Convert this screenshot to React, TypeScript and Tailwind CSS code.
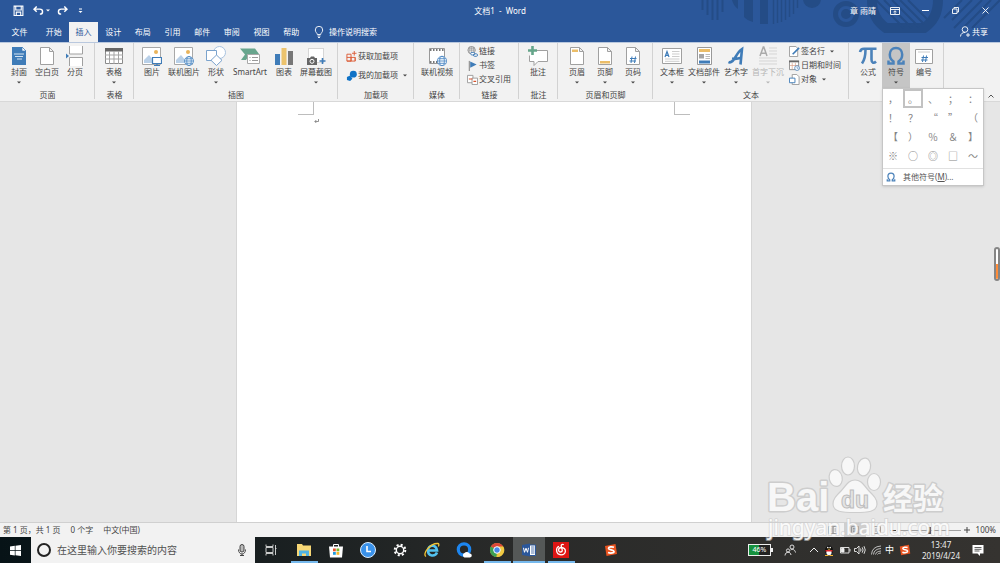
import { useState, type ReactNode } from "react";
import clsx from "clsx";

const TABS = ["开始", "插入", "设计", "布局", "引用", "邮件", "审阅", "视图", "帮助"];

const SYMBOLS = [
  "，", "。", "、", "；", "：",
  "！", "？", "“", "”", "（",
  "【", "）", "％", "＆", "】",
  "※", "○", "◎", "□", "～",
];

/* ---------- ribbon icons, 20x20 ---------- */

function Icon({ children, className = "h-5 w-5" }: { children: ReactNode; className?: string }) {
  return (
    <svg viewBox="0 0 20 20" className={clsx("block shrink-0", className)} fill="none" aria-hidden="true">
      {children}
    </svg>
  );
}

const Sheet = () => <path d="M3.5 1.5h9l4 4v13h-13zM12.5 1.5v4h4" fill="#fff" stroke="#a0a0a0" />;

const CoverIcon = () => (
  <Icon>
    <path d="M3 1h10l4 4v14H3z" fill="#3f7cb8" />
    <path d="M13 1v4h4z" fill="#fff" stroke="#3f7cb8" strokeWidth=".7" />
    <path d="M5 8h10M6 10.500h8M8 13h5" stroke="#d5e4f2" />
  </Icon>
);

const BlankIcon = () => <Icon><Sheet /></Icon>;

const BreakIcon = () => (
  <Icon>
    <path d="M4.500 0v8h13V0M4.500 20v-8.500h13V20" fill="#fff" stroke="#a0a0a0" />
    <path d="M1 7.500 4 10l-3 2.500z" fill="#3f7cb8" />
  </Icon>
);

const TableIcon = () => (
  <Icon>
    <path d="M1.500 2.500h17v15h-17z" fill="#fff" stroke="#8a8a8a" />
    <path d="M1 2h18v3.500H1z" fill="#666" />
    <path d="M1 9h18M1 13h18M5.500 5v13M10 5v13M14.500 5v13" stroke="#a5a5a5" />
  </Icon>
);

const PhotoBase = () => (
  <>
    <path d="M.5 1.500h18v17H.5z" fill="#fff" stroke="#a8a8a8" />
    <circle cx="14" cy="6" r="2" fill="#e9b45c" />
    <path d="M2 17v-3l5-5 5 6v2z" fill="#b9d0e8" />
  </>
);

const Globe = ({ x, y, r }: { x: number; y: number; r: number }) => (
  <g stroke="#4a86c3" strokeWidth=".8">
    <circle cx={x} cy={y} r={r} fill="#eef5fb" />
    <ellipse cx={x} cy={y} rx={r / 2} ry={r} />
    <path d={`M${x - r} ${y}h${r * 2}M${x - r + 1} ${y - r / 2}h${r * 2 - 2}M${x - r + 1} ${y + r / 2}h${r * 2 - 2}`} />
  </g>
);

const PictureIcon = () => (
  <Icon>
    <PhotoBase />
    <path d="M10.500 11.500h9v6h-9zM15 17.500v2M12 19.500h6" fill="#fff" stroke="#3f7cb8" strokeWidth="1.200" />
  </Icon>
);

const OnlinePictureIcon = () => (
  <Icon>
    <PhotoBase />
    <Globe x={15} y={15} r={4.500} />
  </Icon>
);

const ShapesIcon = () => (
  <Icon>
    <circle cx="13.500" cy="6.500" r="6" fill="#fff" stroke="#a9c3df" />
    <path d="M.500 4.500h10v10H.500z" fill="#fff" stroke="#7ba3cd" />
    <path d="m10.500 9 5.500 5.300-5.500 5.200L5 14.300z" fill="#fff" stroke="#7ba3cd" />
  </Icon>
);

const SmartArtIcon = () => (
  <Icon>
    <path d="M0 2.500h15l4 5.500h-9l-4 6H1l4-5.500z" fill="#68a58d" />
    <path d="M7.500 8.500h12v9h-12z" fill="#fff" stroke="#a8a8a8" />
    <path d="M9.500 11.500h1M9.500 14.500h1M12 11.500h6M12 14.500h6" stroke="#999" />
  </Icon>
);

const ChartIcon = () => (
  <Icon>
    <path d="M1 8h5v11H1z" fill="#3f7cb8" />
    <path d="M7.500 2h5v17h-5z" fill="#ecc36d" />
    <path d="M14 5h5v14h-5z" fill="#777" />
  </Icon>
);

const ScreenshotIcon = () => (
  <Icon>
    <path d="M2.500 2.500h15v14h-15z" fill="#fff" stroke="#b5b5b5" strokeDasharray="1 1" />
    <path d="M1 12h3l1-1.500h3l1 1.500h2v7H1z" fill="#666" />
    <circle cx="6" cy="15.300" r="2" fill="#666" stroke="#fff" />
    <path d="M16.500 12v6M13.500 15h6" stroke="#3f7cb8" strokeWidth="1.600" />
  </Icon>
);

const VideoIcon = () => (
  <Icon>
    <path d="M2.500 2.500h15v15h-15z" fill="#fff" stroke="#999" />
    <path d="M3 4h14M3 16h14" stroke="#777" strokeWidth="2" strokeDasharray="1.500 1.500" />
    <Globe x={15} y={15} r={4.700} />
  </Icon>
);

const CommentIcon = () => (
  <Icon>
    <path d="M4.500 4.500h15v11H10l-4 4v-4H1.500v-6" fill="#fff" stroke="#a0a0a0" />
    <path d="M4.500 0v9M0 4.500h9" stroke="#65a58a" strokeWidth="2.600" />
  </Icon>
);

const HeaderIcon = () => <Icon><Sheet /><path d="M5 3.500h6V6H5z" fill="#ebbd68" /></Icon>;
const FooterIcon = () => <Icon><Sheet /><path d="M5 15h10v2.500H5z" fill="#ebbd68" /></Icon>;
const PageNoIcon = () => (
  <Icon>
    <Sheet />
    <path d="M9 10.500 8 17M12.500 10.500l-1 6.500M7 12.500h6.500M6.500 15h6.500" stroke="#3f7cb8" />
  </Icon>
);

const TextBoxIcon = () => (
  <Icon>
    <path d="M.500 2.500h19v15H.500z" fill="#fff" stroke="#a0a0a0" />
    <path d="m3 11 2-5.500L7 11M3.700 9.300h2.800" stroke="#3f7cb8" strokeWidth="1.200" />
    <path d="M10 5.500h7.500M10 8h7.500M10 10.500h7.500M3 13h14.500M3 15.300h14.500" stroke="#c0c0c0" strokeWidth=".8" />
  </Icon>
);

const PartsIcon = () => (
  <Icon>
    <path d="M3.500 1.500h14v17h-14z" fill="#fff" stroke="#999" />
    <path d="M5 3h11v3H5z" fill="#ebbd68" />
    <path d="M5 8h5v4.500H5z" fill="#a5a5a5" />
    <path d="M11.500 8.500H16M11.500 10.500H16M11.500 12.500H16" stroke="#aaa" strokeWidth=".8" />
    <path d="M5 14.500h11v3H5z" fill="#3f7cb8" />
  </Icon>
);

const WordArtIcon = () => (
  <Icon>
    <path d="M2.500 16c3 1.500 5-1.500 7-5s4-6.500 6.500-8L14.500 18.500M6 12.500c3 .700 6 .300 9-.700" stroke="#3f7cb8" strokeWidth="2.600" />
  </Icon>
);

const DropCapIcon = () => (
  <Icon>
    <path d="m2 10 3.300-9h.500L9 10M3.300 7.200h4.600" stroke="#aaa" strokeWidth="1.500" />
    <path d="M11 2h8M11 5h8M11 8h8M1 12h18M1 15h18M1 18h18" stroke="#d5d5d5" />
  </Icon>
);

const PiIcon = () => (
  <Icon>
    <path d="M2 6c.5-2.500 2-3.300 4-3.300h12.500M7.500 3.500c0 6-.500 10-3.500 14M13.500 3.500v10c0 3 2 4.500 4.500 2" stroke="#4b82ba" strokeWidth="2.600" />
  </Icon>
);

const OmegaIcon = ({ className }: { className?: string }) => (
  <Icon className={className}>
    <path d="M2.500 14.500v3h5v-2C5 14 3.800 11.500 3.800 8.500 3.800 4.500 6.300 2 10 2s6.200 2.500 6.200 6.500c0 3-1.200 5.500-3.700 7v2h5v-3" stroke="#4b82ba" strokeWidth="2.500" />
  </Icon>
);

const NumberIcon = () => (
  <Icon>
    <path d="M1.500 3.500h17v14h-17z" fill="#fff" stroke="#a0a0a0" />
    <path d="M4 6h12" stroke="#ccc" />
    <path d="M9.500 9.500 8.500 16M12.500 9.500l-1 6.500M7.500 11.500H14M7 14h6.500" stroke="#3f7cb8" />
  </Icon>
);

/* ---------- small ribbon icons ---------- */

function MiniIcon({ children }: { children: ReactNode }) {
  return <svg viewBox="0 0 12 12" className="h-[11px] w-[11px] shrink-0" fill="none" aria-hidden="true">{children}</svg>;
}

const StoreIcon = () => <MiniIcon><path d="M1 3.500h4.500V11H1zM1 7h9v4H1M5.500 7v4M10 7v4M9 0v5M6.500 2.500h5" stroke="#dc5a33" /></MiniIcon>;
const AddinIcon = () => <MiniIcon><circle cx="8" cy="4.500" r="3.800" fill="#0f72c6" /><path d="M1 7.500 4.500 6 7 9.500 4.500 12 1 11z" fill="#0f72c6" /></MiniIcon>;
const LinkIcon = () => (
  <MiniIcon>
    <circle cx="5" cy="4.500" r="4" stroke="#777" strokeWidth=".8" />
    <path d="M1 4.500h8M5 .500v8M2 2.500h6M3 .800v7.500M7 1v7" stroke="#888" strokeWidth=".6" />
    <rect x="4" y="7" width="4.500" height="2.800" rx="1.400" fill="#fff" stroke="#3f7cb8" />
    <rect x="7" y="8.500" width="4.500" height="2.800" rx="1.400" stroke="#3f7cb8" />
  </MiniIcon>
);
const BookmarkIcon = () => <MiniIcon><path d="M2.500 1v11" stroke="#777" /><path d="M3.500 1.500 10.500 5l-7 3.500z" fill="#3f7cb8" /></MiniIcon>;
const CrossRefIcon = () => (
  <MiniIcon>
    <path d="M.500 1.500h6v8h-6z" fill="#fff" stroke="#999" />
    <path d="M5.500 4.500h6v7h-6z" fill="#fff" stroke="#999" />
    <path d="M2 5.500h4M7 8h3" stroke="#d9532c" strokeWidth="1.200" />
  </MiniIcon>
);
const SignIcon = () => (
  <MiniIcon>
    <path d="M.500.500h7l2 2v9h-9z" fill="#fff" stroke="#999" />
    <path d="m4 9 7-7" stroke="#3f7cb8" strokeWidth="1.800" />
  </MiniIcon>
);
const DateIcon = () => (
  <MiniIcon>
    <path d="M.500 1.500h10v9h-10z" fill="#fff" stroke="#888" />
    <path d="M0 1.500h11" stroke="#666" strokeWidth="2" />
    <path d="M1 6h9M3.500 3v7M7 3v7" stroke="#d69a80" strokeWidth=".7" />
    <circle cx="8.800" cy="8.800" r="2.600" fill="#fff" stroke="#3f7cb8" strokeWidth=".8" />
    <path d="M8.800 7.300V9h1.500" stroke="#3f7cb8" strokeWidth=".7" />
  </MiniIcon>
);
const ObjectIcon = () => (
  <MiniIcon>
    <path d="M3.500.500h5l2.500 2.500v8.500H3.500z" fill="#fff" stroke="#999" />
    <path d="M.500 4.500h6v5h-6z" fill="#fff" stroke="#3f7cb8" />
  </MiniIcon>
);

const Caret = ({ className }: { className?: string }) => (
  <svg viewBox="0 0 4 3" className={clsx("h-[3px] w-1 shrink-0", className)} aria-hidden="true">
    <path d="M0 .500h4L2 2.500z" fill="currentColor" />
  </svg>
);

/* ---------- ribbon parts ---------- */

type BigProps = { icon: ReactNode; label: string; wide?: boolean; caret?: boolean; disabled?: boolean; active?: boolean; onClick?: () => void };

function BigButton({ icon, label, wide, caret, disabled, active, onClick }: BigProps) {
  return (
    <button
      type="button"
      disabled={disabled}
      onClick={onClick}
      className={clsx(
        "flex h-[45px] shrink-0 flex-col items-center whitespace-nowrap pt-[3px]",
        wide ? "w-8" : "w-7",
        active && "bg-[#c5c5c5]",
        disabled && "text-[#b5b5b5]",
      )}
    >
      {icon}
      <span className="flex h-3 items-center">{label}</span>
      {caret && <Caret className="mt-[3px]" />}
    </button>
  );
}

function SmallButton({ icon, label, caret }: { icon: ReactNode; label: string; caret?: boolean }) {
  return (
    <button type="button" className="flex h-[14px] items-center gap-px whitespace-nowrap">
      {icon}
      <span>{label}</span>
      {caret && <Caret className="ml-1" />}
    </button>
  );
}

function Group({ title, className, children }: { title?: string; className?: string; children: ReactNode }) {
  return (
    <section className="relative flex shrink-0 flex-col after:absolute after:top-0 after:right-0 after:h-14 after:w-px after:bg-[#d2d2d2]">
      <div className={clsx("flex h-[45px] shrink-0", className)}>{children}</div>
      {title && <div className="mt-px flex h-3 shrink-0 items-center justify-center">{title}</div>}
    </section>
  );
}

function SymbolMenu() {
  const [picked, setPicked] = useState(1);
  return (
    <div className="absolute top-full left-0 z-20 w-[102px] border border-[#c6c6c6] bg-white shadow-sm">
      <div className="grid grid-cols-5 pb-[3px] font-['Noto_Sans_CJK_SC',sans-serif] text-[10px] leading-none text-[#858585]">
        {SYMBOLS.map((s, i) => (
          <button
            key={s}
            type="button"
            onClick={() => setPicked(i)}
            className={clsx("flex h-[19px] items-center justify-center", i === picked && "border-2 border-[#c2c2c2]")}
          >
            {s}
          </button>
        ))}
      </div>
      <button type="button" className="flex h-[17px] w-full items-center gap-[7px] border-t border-[#e1e1e1] px-[3px] text-[#555]">
        <OmegaIcon className="h-[10px] w-[10px]" />
        <span>其他符号(<u>M</u>)...</span>
      </button>
    </div>
  );
}

function Ribbon() {
  const [open, setOpen] = useState(true);
  return (
    <div className="relative flex h-[60px] border-t border-b border-t-[#b9c8de] border-b-[#d8d8d8] bg-[#f2f2f2] text-[#444]">
      <Group title="页面" className="pr-[6px] pl-[5px]">
        <BigButton icon={<CoverIcon />} label="封面" caret />
        <BigButton icon={<BlankIcon />} label="空白页" />
        <BigButton icon={<BreakIcon />} label="分页" />
      </Group>
      <Group title="表格" className="pr-[6px] pl-[5px]">
        <BigButton icon={<TableIcon />} label="表格" caret />
      </Group>
      <Group title="插图" className="pr-[6px] pl-[2px]">
        <BigButton wide icon={<PictureIcon />} label="图片" />
        <BigButton wide icon={<OnlinePictureIcon />} label="联机图片" />
        <BigButton wide icon={<ShapesIcon />} label="形状" caret />
        <div className="px-[2px]">
          <BigButton wide icon={<SmartArtIcon />} label="SmartArt" />
        </div>
        <BigButton wide icon={<ChartIcon />} label="图表" />
        <BigButton wide icon={<ScreenshotIcon />} label="屏幕截图" caret />
      </Group>
      <Group title="加载项" className="flex-col gap-[5px] pt-[6px] pr-[7px] pl-2">
        <SmallButton icon={<StoreIcon />} label="获取加载项" />
        <SmallButton icon={<AddinIcon />} label="我的加载项" caret />
      </Group>
      <Group title="媒体" className="px-[7px]">
        <BigButton wide icon={<VideoIcon />} label="联机视频" />
      </Group>
      <Group title="链接" className="flex-col pt-px pr-2 pl-[7px]">
        <SmallButton icon={<LinkIcon />} label="链接" />
        <SmallButton icon={<BookmarkIcon />} label="书签" />
        <SmallButton icon={<CrossRefIcon />} label="交叉引用" />
      </Group>
      <Group title="批注" className="pr-[6px] pl-[5px]">
        <BigButton icon={<CommentIcon />} label="批注" />
      </Group>
      <Group title="页眉和页脚" className="pr-[6px] pl-[5px]">
        <BigButton icon={<HeaderIcon />} label="页眉" caret />
        <BigButton icon={<FooterIcon />} label="页脚" caret />
        <BigButton icon={<PageNoIcon />} label="页码" caret />
      </Group>
      <Group title="文本" className="pr-2 pl-[3px]">
        <BigButton wide icon={<TextBoxIcon />} label="文本框" caret />
        <BigButton wide icon={<PartsIcon />} label="文档部件" caret />
        <BigButton wide icon={<WordArtIcon />} label="艺术字" caret />
        <BigButton wide icon={<DropCapIcon />} label="首字下沉" caret disabled />
        <div className="flex flex-col pt-px pl-[5px]">
          <SmallButton icon={<SignIcon />} label="签名行" caret />
          <SmallButton icon={<DateIcon />} label="日期和时间" />
          <SmallButton icon={<ObjectIcon />} label="对象" caret />
        </div>
      </Group>
      <Group className="pr-[6px] pl-[5px]">
        <BigButton icon={<PiIcon />} label="公式" caret />
        <div className="relative">
          <BigButton icon={<OmegaIcon />} label="符号" caret active={open} onClick={() => setOpen(!open)} />
          {open && <SymbolMenu />}
        </div>
        <BigButton icon={<NumberIcon />} label="编号" />
      </Group>
      <button type="button" aria-label="折叠功能区" className="mt-auto mr-[6px] mb-[2px] ml-auto">
        <svg viewBox="0 0 6 6" className="h-[6px] w-[6px]" fill="none"><path d="M.500 4.500 3 2l2.500 2.500" stroke="#555" /></svg>
      </button>
    </div>
  );
}

/* ---------- title bar ---------- */

function HeaderArt() {
  return (
    <svg viewBox="0 0 310 42" className="pointer-events-none absolute top-0 right-0 h-[42px] w-[310px]" fill="none" aria-hidden="true">
      <g stroke="#244c86">
        <path d="M12.500 0v10M17.500 0v15M22.500 0v20M27.500 0v20M32.500 0v12" strokeWidth="2" />
        <path d="M83.500 0v24M87.500 0v23M91.500 0v22M95.500 0v20M99.500 0v17M103.500 0v14M107.500 0v8" strokeWidth="1.500" />
        <circle cx="156" cy="14" r="10.500" strokeWidth="5" />
        <path d="M182 0c0 12 5 22 14 28h38c9-6 14-16 14-28" strokeWidth="10" />
        <path d="m186 0 28 28M194 0l28 28M202 0l27 27M210 0l24 24M218 0l20 20" strokeWidth="2" />
        <path d="m264 28 28-28M273 28l28-28M262 20l20-20M282 28l28-28M254 18l18-18" strokeWidth="2" />
      </g>
      <g fill="#244c86">
        <path d="M42 0h6v9C45 7 43 4 42 0zM54 0h9v22c-4-1-7-3-9-5zM70 0h8v24h-8z" />
        <circle cx="122" cy="-1" r="9" />
        <circle cx="156" cy="14" r="5" />
      </g>
    </svg>
  );
}

function TitleBar() {
  return (
    <div className="relative grid h-[21px] grid-cols-[1fr_auto_1fr] items-center">
      <div className="flex items-center pl-[13px]">
        <button type="button" aria-label="保存" className="w-5">
          <svg viewBox="0 0 10 10" className="h-[11px] w-[11px]" fill="none" stroke="#fff">
            <path d="M1 1h8v8.500H1zM2.500 1v3.500h5V1M3 9V6.500h4V9" />
          </svg>
        </button>
        <button type="button" aria-label="撤消" className="flex w-6 items-center gap-[2px]">
          <svg viewBox="0 0 12 10" className="h-[9px] w-[11px]" fill="none" stroke="#fff" strokeWidth="1.600">
            <path d="M4 .500 1 3.500l3 3M1 3.500h6.500c4 0 4 5.500 0 5.500" />
          </svg>
          <Caret className="text-white" />
        </button>
        <button type="button" aria-label="恢复" className="w-[21px]">
          <svg viewBox="0 0 12 10" className="h-[9px] w-[11px]" fill="none" stroke="#fff" strokeWidth="1.600">
            <path d="m8 .500 3 3-3 3M11 3.500H4.500c-4 0-4 5.500 0 5.500" />
          </svg>
        </button>
        <button type="button" aria-label="自定义快速访问工具栏">
          <svg viewBox="0 0 5 6" className="h-[6px] w-[5px]"><path d="M1 .500h3v1H1zM.500 3h4L2.500 5z" fill="#fff" /></svg>
        </button>
      </div>
      <div className="whitespace-pre">文档1  -  Word</div>
      <div className="flex items-center justify-end">
        <span className="mr-1">章 雨晴</span>
        <button type="button" aria-label="功能区显示选项" className="flex w-[30px] justify-center">
          <svg viewBox="0 0 10 8" className="h-2 w-[10px]" fill="none" stroke="#fff" strokeWidth=".9"><path d="M.500.500h9v7h-9zM.500 2.500h9M5 7V4M3.500 5 5 3.800 6.500 5" /></svg>
        </button>
        <button type="button" aria-label="最小化" className="flex w-[30px] justify-center">
          <svg viewBox="0 0 7 7" className="h-[7px] w-[7px]" stroke="#fff"><path d="M0 3.500h7" /></svg>
        </button>
        <button type="button" aria-label="向下还原" className="flex w-[30px] justify-center">
          <svg viewBox="0 0 7 7" className="h-[7px] w-[7px]" fill="none" stroke="#fff" strokeWidth=".9"><path d="M.500 2h4.500v4.500H.500zM2 2V.500h4.500V5H5" /></svg>
        </button>
        <button type="button" aria-label="关闭" className="flex w-[30px] justify-center">
          <svg viewBox="0 0 7 7" className="h-[7px] w-[7px]" stroke="#fff" strokeWidth=".9"><path d="m.500.500 6 6M6.500.500l-6 6" /></svg>
        </button>
      </div>
    </div>
  );
}

function TabBar() {
  const [tab, setTab] = useState("插入");
  return (
    <div className="relative flex h-[21px] items-stretch">
      <button type="button" className="w-[39px]">文件</button>
      <nav className="grid w-[267px] grid-cols-9 pt-px">
        {TABS.map((t) => (
          <button key={t} type="button" onClick={() => setTab(t)} className={clsx(t === tab && "bg-[#f2f2f2] text-[#2b579a]")}>
            {t}
          </button>
        ))}
      </nav>
      <button type="button" className="ml-2 flex items-center gap-[5px]">
        <svg viewBox="0 0 10 12" className="h-3 w-[10px]" fill="none" stroke="#fff" strokeWidth=".9">
          <path d="M3.300 8.500c0-1.500-2-2.200-2-4.500a3.700 3.700 0 0 1 7.400 0c0 2.300-2 3-2 4.500zM3.500 10h3M4 11.500h2" />
        </svg>
        操作说明搜索
      </button>
      <button type="button" className="mr-3 ml-auto flex items-center gap-px">
        <svg viewBox="0 0 11 11" className="h-[11px] w-[11px]" fill="none" stroke="#fff" strokeWidth=".9">
          <circle cx="5" cy="3.500" r="2.800" />
          <path d="M.500 10.500c.3-3 2-4 4.500-4M8 7v4M6 9h4" />
        </svg>
        共享
      </button>
    </div>
  );
}

/* ---------- document ---------- */

function Document() {
  return (
    <main className="relative flex flex-1 bg-[#e6e6e6] pr-3">
      <div className="mx-auto w-[516px] border-x border-[#d6d6d6] bg-white">
        <div className="flex justify-between px-[61px]">
          <div className="h-[13px] w-4 border-r border-b border-[#bdbdbd]" />
          <div className="h-[13px] w-4 border-b border-l border-[#bdbdbd]" />
        </div>
        <div className="px-[77px] pt-1">
          <svg viewBox="0 0 5 5" className="h-[5px] w-[5px]" fill="none" stroke="#777" strokeWidth=".8"><path d="M4.500 0v2.500H1M2.300 1 .800 2.500l1.500 1.500" /></svg>
        </div>
      </div>
      <div className="absolute top-[145px] right-0 flex h-[34px] w-[6px] items-end overflow-hidden rounded-sm border-2 border-[#858585] bg-white">
        <div className="h-1/2 w-full bg-[#ff8c39]" />
      </div>
    </main>
  );
}

function StatusBar() {
  return (
    <footer className="flex h-[15px] items-center border-t border-[#d0d0d0] bg-[#f2f2f2] pl-[3px] text-[#444]">
      <span>第 1 页，共 1 页</span>
      <span className="ml-[10px]">0 个字</span>
      <span className="ml-[10px]">中文(中国)</span>
      <div className="ml-auto flex h-full items-center">
        <button type="button" aria-label="阅读视图" className="flex h-full w-[22px] items-center justify-center">
          <svg viewBox="0 0 10 8" className="h-2 w-[10px]" fill="none" stroke="#999"><path d="M.500.500H5v7H.500zM5 .500h4.500v7H5zM2 3h1.500M6.500 3H8M2 5h1.500M6.500 5H8" /></svg>
        </button>
        <button type="button" aria-label="页面视图" className="flex h-full w-[22px] items-center justify-center bg-[#cfcfcf]">
          <svg viewBox="0 0 8 8" className="h-2 w-2" fill="none" stroke="#999"><path d="M.500.500h7v7h-7zM2 2.500h4M2 4h4M2 5.500h4" /></svg>
        </button>
        <button type="button" aria-label="Web 版式视图" className="flex h-full w-[22px] items-center justify-center">
          <svg viewBox="0 0 8 8" className="h-2 w-2" fill="none" stroke="#999"><path d="M.500.500h7v7h-7zM2 3h4M2 5h2" /><circle cx="6" cy="6" r="1.500" /></svg>
        </button>
        <button type="button" aria-label="缩小" className="flex w-[10px] justify-center">
          <svg viewBox="0 0 6 6" className="h-[6px] w-[6px]" stroke="#444"><path d="M0 3.500h6" /></svg>
        </button>
        <input
          type="range"
          aria-label="缩放"
          defaultValue={50}
          className="mx-px h-px w-[62px] appearance-none bg-[#a0a0a0] [&::-webkit-slider-thumb]:h-[7px] [&::-webkit-slider-thumb]:w-[3px] [&::-webkit-slider-thumb]:appearance-none [&::-webkit-slider-thumb]:bg-[#555]"
        />
        <button type="button" aria-label="放大" className="flex w-[10px] justify-center">
          <svg viewBox="0 0 6 6" className="h-[6px] w-[6px]" stroke="#444"><path d="M0 3h6M3 0v6" /></svg>
        </button>
        <span className="mx-1">100%</span>
      </div>
    </footer>
  );
}

/* ---------- taskbar ---------- */

function TaskButton({ label, open, active, children }: { label: string; open?: boolean; active?: boolean; children: ReactNode }) {
  return (
    <button
      type="button"
      aria-label={label}
      className={clsx(
        "relative flex h-full w-8 items-center justify-center",
        active && "bg-[#555857]",
        open && "after:absolute after:bottom-0 after:h-[2px] after:bg-[#76b9ed]",
        open && (active ? "after:w-full" : "after:w-[27px]"),
      )}
    >
      <svg viewBox="0 0 16 16" className="h-4 w-4" fill="none">{children}</svg>
    </button>
  );
}

const Sogou = () => (
  <>
    <path d="M2 4 12.500 2l1.500 10-10.500 2z" fill="#e9531f" />
    <path d="M11 5.200c-2-.700-5.500-.500-5.500 1.200S10.800 7.500 11 9.300 7.500 11.500 5 10.500" stroke="#fff" strokeWidth="1.700" fill="none" />
  </>
);

function Tray() {
  return (
    <div className="ml-auto flex h-full items-center text-white">
      <div className="relative mr-[13px] flex h-3 w-[23px] items-center justify-center border border-[#eee] bg-[linear-gradient(90deg,#17923f_46%,#222_46%)] text-[7px] after:absolute after:-right-[3px] after:h-1 after:w-[2px] after:bg-[#eee]">
        46%
      </div>
      <div className="flex items-center">
        <svg viewBox="0 0 12 12" className="mr-3 h-3 w-3" fill="none" stroke="#eee" strokeWidth=".9">
          <circle cx="8" cy="3" r="2" /><circle cx="4" cy="6.500" r="1.600" />
          <path d="M1 11.500c.300-2.200 1.500-3.300 3-3.300S6.700 9 7 11M6.500 6c2.500-1.500 4.500 0 5 2.500" />
        </svg>
        <svg viewBox="0 0 12 12" className="mr-[3px] h-3 w-3" fill="none" stroke="#eee"><path d="m2 8 4-4 4 4" /></svg>
        <svg viewBox="0 0 12 12" className="mr-1 h-3 w-3">
          <ellipse cx="6" cy="6.500" rx="4" ry="5" fill="#111" />
          <ellipse cx="6" cy="8.500" rx="2.600" ry="2.800" fill="#fff" />
          <circle cx="4.800" cy="3.500" r=".8" fill="#fff" /><circle cx="7.200" cy="3.500" r=".8" fill="#fff" />
          <path d="M4 4.800h4l-2 1z" fill="#f4b22e" />
          <path d="M2.500 6h7v1.500h-7z" fill="#d8262b" />
          <path d="M2 11h3.500v1H2zM6.500 11H10v1H6.500z" fill="#f4b22e" />
        </svg>
        <svg viewBox="0 0 12 12" className="mr-[3px] h-3 w-3" fill="none" stroke="#eee" strokeWidth=".9"><path d="M1.500 3.500h8.500v5.500H1.500zM11 5v2.500" /><path d="M2.500 4.500h2.500V8H2.500z" fill="#eee" /></svg>
        <svg viewBox="0 0 12 12" className="mr-1 h-3 w-3" fill="none" stroke="#eee" strokeWidth=".9"><path d="M.500 4.500h2L5 2v8L2.500 7.500h-2zM6.500 4.500q1 1.500 0 3M8.200 3.300q1.800 2.700 0 5.400M10 2.200q2.500 3.800 0 7.600" /></svg>
        <svg viewBox="0 0 12 12" className="mr-[3px] h-3 w-3" fill="none" stroke="#ccc" strokeWidth=".9"><path d="M1.500 10.500Q2 2.500 11 2M3.500 10.500Q4 5 11 4.500M5.500 10.500Q6 7.500 11 7M7.500 10.500q.500-1.500 3.500-1.500" /></svg>
        <span className="mr-1 text-[9px]">中</span>
        <svg viewBox="0 0 16 16" className="h-[14px] w-[14px]"><Sogou /></svg>
      </div>
      <div className="ml-[10px] text-center text-[8px] leading-[11px] text-[#eee]">
        <div>13:47</div>
        <div>2019/4/24</div>
      </div>
      <button type="button" aria-label="通知" className="mr-4 ml-3">
        <svg viewBox="0 0 12 12" className="h-3 w-3"><path d="M.500 1h11v8.500H8V12L5.500 9.500h-5z" fill="#fff" /><path d="M2.500 3.500h7M2.500 5.300h7M2.500 7h5" stroke="#333" strokeWidth=".8" /></svg>
      </button>
    </div>
  );
}

function Taskbar() {
  return (
    <div className="flex h-[26px] items-center bg-linear-to-r from-[#071317] via-[#292a29] to-[#353330]">
      <button type="button" aria-label="开始" className="flex w-[31px] justify-center">
        <svg viewBox="0 0 11 11" className="h-[11px] w-[11px]" fill="#fff"><path d="m0 1.500 4.800-.7v4.400H0zM5.500.700 11 0v5.200H5.500zM0 5.900h4.800v4.500L0 9.700zM5.500 5.900H11V11l-5.500-.700z" /></svg>
      </button>
      <label className="flex h-full w-56 items-center gap-[6px] bg-[#f2f2f2] px-[6px]">
        <span className="h-[14px] w-[14px] shrink-0 rounded-full border-2 border-[#222]" />
        <input type="text" aria-label="搜索" placeholder="在这里输入你要搜索的内容" className="min-w-0 flex-1 text-[10px] text-[#333] outline-none placeholder:text-[#505050]" />
        <svg viewBox="0 0 10 12" className="mr-[2px] h-3 w-[10px] shrink-0" fill="none" stroke="#444">
          <rect x="3" y=".5" width="4" height="7.500" rx="2" fill="#bbb" />
          <path d="M1.500 5.500c0 6 7 6 7 0M5 10v2M3 11.500h4" />
        </svg>
      </label>
      <TaskButton label="任务视图">
        <path d="M3 2.500v2h7v-2M3 13.500v-2h7v2M3 5.500h7v5H3zM12.500 3v10M12 6.500h1.500" stroke="#ddd" strokeWidth=".9" />
      </TaskButton>
      <div className="ml-px flex h-full">
        <TaskButton label="文件资源管理器" open>
          <path d="M1 2h5l1 1.500h8V14H1z" fill="#f7d775" />
          <path d="M3 8.500h10V14h-3v-2.500H6V14H3z" fill="#4eb3e4" />
        </TaskButton>
        <TaskButton label="应用商店">
          <path d="M5.500 5V2.500h5V5" stroke="#fff" /><path d="M1 4.500h14l-1 11H2z" fill="#fff" />
          <path d="M5 6.500h2.800v2.800H5z" fill="#e8502c" /><path d="M8.500 6.500h2.800v2.800H8.500z" fill="#7bb928" />
          <path d="M5 10h2.800v2.800H5z" fill="#1f9ce0" /><path d="M8.500 10h2.800v2.800H8.500z" fill="#f5b72b" />
        </TaskButton>
        <TaskButton label="时钟">
          <circle cx="8" cy="8" r="7.500" fill="#3a92ea" stroke="#dceeff" />
          <path d="M7 4v5.500h4" stroke="#fff" strokeWidth="1.600" />
        </TaskButton>
        <TaskButton label="设置">
          <circle cx="8" cy="8" r="5.300" stroke="#fff" strokeWidth="2" strokeDasharray="2.080 2.080" />
          <circle cx="8" cy="8" r="3.700" stroke="#fff" strokeWidth="1.400" />
        </TaskButton>
        <TaskButton label="Internet Explorer">
          <path d="M13 10.500c-2 4.500-9 4-9-2s8-6.500 9 0H4.500" stroke="#53c3f1" strokeWidth="2.600" />
          <path d="M2 14.500C-2 12 6 1 14 1.500c1.200.200 1 2 .300 3" stroke="#f3c433" strokeWidth="1.300" />
        </TaskButton>
        <TaskButton label="QQ浏览器">
          <circle cx="8" cy="7.500" r="5.700" stroke="#1d86f0" strokeWidth="3.200" />
          <path d="M8.500 15.500a2.400 2.400 0 0 1 0-4.500 3 3 0 0 1 5 .500 2 2 0 0 1 .500 4z" fill="#fff" />
        </TaskButton>
      </div>
      <div className="ml-px flex h-full">
        <TaskButton label="Google Chrome" open>
          <circle cx="8" cy="8" r="7" fill="#e6b93a" />
          <path d="M8 8 1.900 4.500A7 7 0 0 1 14.100 4.500z" fill="#dc4638" />
          <path d="M8 8 1.900 4.500A7 7 0 0 0 7.500 15z" fill="#3c9f53" />
          <path d="M8 4.500h6.300a7 7 0 0 1-6.800 10.500l3.500-6z" fill="#f0c942" />
          <circle cx="8" cy="8" r="3.300" fill="#4787e8" stroke="#fff" />
        </TaskButton>
        <TaskButton label="Word" open active>
          <path d="M8 3h6.500v10.500H8z" fill="#fff" stroke="#2b579a" />
          <path d="M10 5h3.500M10 7h3.500M10 9h3.500M10 11h3.500" stroke="#2b579a" strokeWidth=".8" />
          <path d="M1 3 9 1.500v13L1 13z" fill="#2b579a" />
          <path d="m2.500 5.800 1 4.500L5 6.200l1.500 4.100 1-4.500" stroke="#fff" />
        </TaskButton>
        <TaskButton label="网易云音乐" open>
          <path d="M0 0h16v16H0z" fill="#dd1513" />
          <path d="M6 4.300C2.500 5.500 2.500 12.500 8 12.800c5.500 0 6-7 .500-7.300C4.500 5.700 5 10 7.500 10s2-1.700.700-6c-.200-1.500 1.300-2 2.600-1.200" stroke="#fff" strokeWidth="1.300" />
        </TaskButton>
      </div>
      <div className="ml-[18px]">
        <TaskButton label="搜狗输入法"><Sogou /></TaskButton>
      </div>
      <Tray />
    </div>
  );
}

function Watermark() {
  return (
    <svg viewBox="0 0 190 90" className="pointer-events-none absolute right-[48px] bottom-[20px] z-30 h-[90px] w-[190px]" fill="#f7f7f7" stroke="#cdcdcd" aria-hidden="true">
      <g strokeWidth="3" paintOrder="stroke" strokeLinejoin="round">
        <text x="5" y="58" className="font-['Liberation_Sans',sans-serif] text-[40px] font-bold">Bai</text>
        <text x="121" y="56" className="font-['Noto_Sans_CJK_SC',sans-serif] text-[30px] font-bold">经验</text>
      </g>
      <g strokeWidth="1.200">
        <ellipse cx="73.700" cy="25" rx="6.500" ry="8.500" transform="rotate(-12 73.700 25)" />
        <ellipse cx="86" cy="13" rx="6.500" ry="9" />
        <ellipse cx="102" cy="14" rx="6.500" ry="9" transform="rotate(12 102 14)" />
        <ellipse cx="112" cy="29" rx="6.500" ry="8.500" />
        <path d="M93 27c7 0 9 6 14 11s8 8 8 13c0 8-9 8.500-22 8.500s-22-.500-22-8.500c0-5 3-8 8-13s7-11 14-11z" />
      </g>
      <text x="79" y="55" className="font-['Liberation_Sans',sans-serif] text-[23px] font-bold" fill="#e4e4e4" stroke="#bdbdbd">du</text>
      <text x="6" y="82" className="font-['Noto_Sans',sans-serif] text-[21px]" fill="#fff" fillOpacity=".9" strokeOpacity=".6" paintOrder="stroke" strokeWidth="2">jingyan.baidu.com</text>
    </svg>
  );
}

export default function App() {
  return (
    <div className="relative flex min-h-screen flex-col overflow-hidden font-['Noto_Sans','Noto_Sans_CJK_SC',sans-serif] text-[8px] leading-[12px]">
      <header className="relative bg-[#2b579a] text-white">
        <HeaderArt />
        <TitleBar />
        <TabBar />
      </header>
      <Ribbon />
      <Document />
      <StatusBar />
      <Taskbar />
      <Watermark />
    </div>
  );
}
